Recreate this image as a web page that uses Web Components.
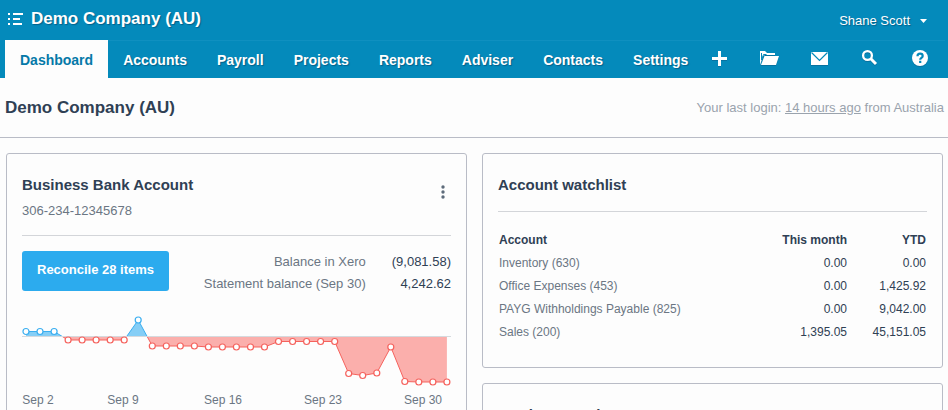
<!DOCTYPE html>
<html lang="en">
<head>
<meta charset="utf-8">
<title>Demo Company (AU)</title>
<style>
  html {
    --brand: #048abb;
    --ink: #2f4054;
    --muted: #6b7683;
    --rule: #d3d5d9;
    --edge: #b9bcc6;
    --page: #fdfdfd;
  }
  body {
    margin: 0;
    height: 100vh;
    overflow: hidden;
    background: var(--page);
    color: var(--ink);
    font: 13px "Liberation Sans", Arial, sans-serif;
  }
</style>
</head>
<body>

<app-header company="Demo Company (AU)" user="Shane Scott"></app-header>

<page-heading title="Demo Company (AU)">
  Your last login: <a href="#history">14 hours ago</a> from Australia
</page-heading>

<dash-board>
  <dash-card slot="left" heading="Business Bank Account">
    <span slot="sub">306-234-12345678</span>
    <card-menu slot="action"></card-menu>
    <bank-summary></bank-summary>
    <balance-chart></balance-chart>
  </dash-card>
  <dash-card slot="right" heading="Account watchlist">
    <watch-list></watch-list>
  </dash-card>
  <dash-card slot="right" heading="Invoices owed to you"></dash-card>
</dash-board>

<script>
class AppHeader extends HTMLElement {
  constructor() {
    super();
    this._root = this.attachShadow({mode: 'open'});
  }

  connectedCallback() {
    this._root.innerHTML = `<style>
      :host { display: block; background: var(--brand); color: #fff; padding: 0 3px 0 5px; text-shadow: 1px 1px 1px #04608a; }
      .top { display: flex; align-items: center; justify-content: space-between; height: 40px; padding: 0 18px 0 3px; }
      button { background: none; border: 0; padding: 0; margin: 0; color: inherit; font: inherit; text-shadow: inherit; cursor: pointer; }
      .company { display: flex; align-items: center; gap: 8px; font-size: 17px; font-weight: bold; line-height: 20px; padding-bottom: 3px; }
      .user { display: flex; align-items: center; gap: 10px; line-height: 20px; padding-top: 2px; }
      svg { display: block; fill: currentColor; }
    </style>
    <div class="top">
      <button class="company">
        <svg width="15" height="12" viewBox="0 0 15 12" aria-hidden="true"><path d="M0 0h2v2H0zM5 0h10v2H5zM0 5h2v2H0zM5 5h7v2H5zM0 10h2v2H0zM5 10h9v2H5z"/></svg>
        ${this.getAttribute('company')}
      </button>
      <button class="user">
        ${this.getAttribute('user')}
        <svg width="7" height="4" viewBox="0 0 7 4" aria-hidden="true"><path d="M0 0h7L3.500 4z"/></svg>
      </button>
    </div>
    <main-nav></main-nav>`;
  }
}
customElements.define('app-header', AppHeader);


class MainNav extends HTMLElement {
  constructor() {
    super();
    this._root = this.attachShadow({mode: 'open'});
    this._tabs = ['Dashboard', 'Accounts', 'Payroll', 'Projects', 'Reports', 'Adviser', 'Contacts', 'Settings'];
    this._icons = [
      ['Add new', '<path d="M8 2h3v6h6v3h-6v6H8v-6H2V8h6z"/>'],
      ['Files', '<path d="M0 2h5l2 2h8v2H5L3 7 1 13 0 16z"/><path d="M4.500 7H19l-3 9H1z"/><path d="M1.500 4v7l2-5.500h3" fill="none" stroke="var(--brand)"/>'],
      ['Inbox', '<path d="M1 3h17v13H1z"/><path d="M1.500 3.500l8 8 8-8" fill="none" stroke="var(--brand)" stroke-width="1.200"/>'],
      ['Search', '<circle cx="7.500" cy="6.500" r="4.400" fill="none" stroke="currentColor" stroke-width="2.300"/><path d="M10.800 9.800l5.200 5.200" fill="none" stroke="currentColor" stroke-width="3"/>'],
      ['Help', '<circle cx="10" cy="9" r="8"/><path d="M7.500 7.200c0-3.400 5.200-3.200 5.200-.2 0 2-2.500 1.700-2.500 3.700M10.200 11.800v2.200" fill="none" stroke="var(--brand)" stroke-width="2.200"/>']
    ];
  }

  connectedCallback() {
    const tabs = this._tabs.map((t, i) =>
      `<a href="#${t.toLowerCase()}"${i === 0 ? ' class="current" aria-current="page"' : ''}>${t}</a>`).join('');
    const icons = this._icons.map(([label, shape]) =>
      `<button aria-label="${label}"><svg width="20" height="20" viewBox="0 0 20 20" aria-hidden="true">${shape}</svg></button>`).join('');
    this._root.innerHTML = `<style>
      :host { display: block; }
      nav { display: flex; justify-content: space-between; height: 38px; box-shadow: inset 0 1px #0f90c0; }
      .tabs { display: flex; }
      a { padding: 0 15px; font-size: 14px; font-weight: bold; line-height: 40px; color: #fff; text-decoration: none; }
      a.current { background: var(--page); color: #0579a8; text-shadow: none; }
      .icons { display: flex; gap: 18px; padding-right: 9px; }
      button { display: flex; align-items: center; justify-content: center; width: 32px; padding: 0; border: 0; background: none; color: #fff; cursor: pointer; }
      svg { fill: currentColor; filter: drop-shadow(0 1px 0 #0672a0); }
    </style>
    <nav><div class="tabs">${tabs}</div><div class="icons">${icons}</div></nav>`;
  }
}
customElements.define('main-nav', MainNav);


class PageHeading extends HTMLElement {
  constructor() {
    super();
    this._root = this.attachShadow({mode: 'open'});
  }

  connectedCallback() {
    this._root.innerHTML = `<style>
      :host { display: flex; align-items: center; justify-content: space-between; height: 59px; padding: 0 4px 0 5px; border-bottom: 1px solid var(--edge); }
      h1 { margin: 0; font-size: 17px; line-height: 20px; }
      p { margin: 0; line-height: 20px; color: #9aa3ad; }
      ::slotted(a) { color: inherit; }
    </style>
    <h1>${this.getAttribute('title')}</h1>
    <p><slot></slot></p>`;
  }
}
customElements.define('page-heading', PageHeading);


class DashBoard extends HTMLElement {
  constructor() {
    super();
    this._root = this.attachShadow({mode: 'open'});
    this._root.innerHTML = `<style>
      :host { display: grid; grid-template-columns: 1fr 1fr; gap: 15px; align-items: start; padding: 15px 5px 15px 6px; }
      .col { display: flex; flex-direction: column; gap: 15px; min-width: 0; }
    </style>
    <div class="col"><slot name="left"></slot></div>
    <div class="col"><slot name="right"></slot></div>`;
  }
}
customElements.define('dash-board', DashBoard);


class DashCard extends HTMLElement {
  constructor() {
    super();
    this._root = this.attachShadow({mode: 'open'});
  }

  connectedCallback() {
    this._root.innerHTML = `<style>
      :host { display: block; border: 1px solid var(--edge); border-radius: 3px; padding: 0 15px 15px; }
      header { display: flex; align-items: flex-start; justify-content: space-between; padding: 18px 0 14px; border-bottom: 1px solid var(--rule); }
      h2 { margin: 0; font-size: 15px; line-height: 25px; }
      ::slotted([slot=sub]) { display: block; margin-top: 4px; line-height: 20px; color: var(--muted); }
    </style>
    <header>
      <div><h2>${this.getAttribute('heading')}</h2><slot name="sub"></slot></div>
      <slot name="action"></slot>
    </header>
    <slot></slot>`;
  }
}
customElements.define('dash-card', DashCard);


class CardMenu extends HTMLElement {
  constructor() {
    super();
    this._root = this.attachShadow({mode: 'open'});
    this._root.innerHTML = `<style>
      :host { display: block; padding-top: 9px; }
      button { display: block; padding: 4px 6px; border: 0; background: none; color: #5d6b7a; cursor: pointer; }
      svg { display: block; fill: currentColor; }
    </style>
    <button aria-label="Options">
      <svg width="4" height="14" viewBox="0 0 4 14" aria-hidden="true"><circle cx="2" cy="2" r="1.700"/><circle cx="2" cy="7" r="1.700"/><circle cx="2" cy="12" r="1.700"/></svg>
    </button>`;
  }
}
customElements.define('card-menu', CardMenu);


class BankSummary extends HTMLElement {
  constructor() {
    super();
    this._root = this.attachShadow({mode: 'open'});
    this._root.innerHTML = `<style>
      :host { display: flex; align-items: flex-start; justify-content: space-between; padding-top: 15px; }
      button { height: 40px; padding: 0 15px 4px; border: 0; border-radius: 3px; background: #2cabee; color: #fff; font: bold 13px "Liberation Sans", Arial, sans-serif; cursor: pointer; }
      dl { display: grid; grid-template-columns: auto auto; column-gap: 26px; margin: 0; line-height: 22px; text-align: right; }
      dt { color: var(--muted); }
      dd { margin: 0; }
    </style>
    <button>Reconcile 28 items</button>
    <dl>
      <dt>Balance in Xero</dt><dd>(9,081.58)</dd>
      <dt>Statement balance (Sep 30)</dt><dd>4,242.62</dd>
    </dl>`;
  }
}
customElements.define('bank-summary', BankSummary);


class BalanceChart extends HTMLElement {
  constructor() {
    super();
    this._root = this.attachShadow({mode: 'open'});
    // distance from the zero line, one per day, down is overdrawn
    this._days = [-5, -5, -5, 3.5, 3.5, 3.5, 3.5, 3.5, -16.5, 9.5, 9.5, 9.5, 9.5,
      10.5, 10.5, 10.5, 10.5, 10.5, 5, 5, 5, 5, 5, 37, 39, 36.5, 10.5, 45, 45.5, 45.5, 45.5];
    this._labels = [['Sep 2', 16], ['Sep 9', 101], ['Sep 16', 201], ['Sep 23', 301], ['Sep 30', 401]];
  }

  connectedCallback() {
    this._render();
  }

  _render() {
    const zero = 41.5;
    const points = this._days.map((d, i) => [(4 + i * 14.03).toFixed(1), zero + d]);
    const line = points.map(p => p.join(' ')).join(' L');
    const area = `M4 ${zero} L${line} V${zero}z`;
    const dots = points.map(([x, y]) =>
      `<circle cx="${x}" cy="${y}" r="3" class="${y < zero ? 'up' : 'down'}"/>`).join('');
    const labels = this._labels.map(([t, x]) => `<text x="${x}" y="109">${t}</text>`).join('');

    this._root.innerHTML = `<style>
      :host { display: block; }
      svg { display: block; width: 100%; height: auto; }
      circle { fill: #fff; stroke-width: 1.2; }
      .up { stroke: #3aaef0; }
      .down { stroke: #f5625d; }
      .line { fill: none; }
      text { font-size: 12px; fill: var(--muted); text-anchor: middle; }
    </style>
    <svg viewBox="0 0 429 114" role="img" aria-label="Balance by day">
      <clipPath id="above"><rect width="429" height="${zero}"/></clipPath>
      <clipPath id="below"><rect y="${zero}" width="429" height="60"/></clipPath>
      <g clip-path="url(#above)"><path d="${area}" fill="#85cef6"/><path d="M${line}" class="line up"/></g>
      <g clip-path="url(#below)"><path d="${area}" fill="#fbafac"/><path d="M${line}" class="line down"/></g>
      <path d="M0 ${zero}H429" stroke="#d5dade"/>
      ${dots}${labels}
    </svg>`;
  }
}
customElements.define('balance-chart', BalanceChart);


class WatchList extends HTMLElement {
  constructor() {
    super();
    this._root = this.attachShadow({mode: 'open'});
    this._accounts = [
      ['Inventory (630)', '0.00', '0.00'],
      ['Office Expenses (453)', '0.00', '1,425.92'],
      ['PAYG Withholdings Payable (825)', '0.00', '9,042.00'],
      ['Sales (200)', '1,395.05', '45,151.05']
    ];
  }

  connectedCallback() {
    const rows = this._accounts.map(([name, month, ytd]) =>
      `<tr><td>${name}</td><td>${month}</td><td>${ytd}</td></tr>`).join('');
    this._root.innerHTML = `<style>
      :host { display: block; padding: 17px 0 8px; }
      table { width: 100%; border-collapse: collapse; font-size: 12px; line-height: 23px; }
      th, td { padding: 0 1px; text-align: right; }
      th:first-child, td:first-child { text-align: left; }
      td:first-child { color: var(--muted); }
      th:last-child { width: 77px; }
    </style>
    <table>
      <thead><tr><th>Account</th><th>This month</th><th>YTD</th></tr></thead>
      <tbody>${rows}</tbody>
    </table>`;
  }
}
customElements.define('watch-list', WatchList);
</script>
</body>
</html>
